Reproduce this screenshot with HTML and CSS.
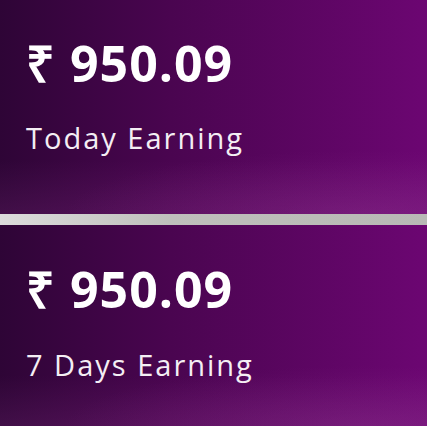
FILE: index.html
```html
<!DOCTYPE html>
<html>
<head>
<meta charset="utf-8">
<link rel="stylesheet" href="styles.css">
</head>
<body>
<div class="page">
  <div class="card">
    <div class="amount">₹ 950.09</div>
    <div class="label">Today Earning</div>
  </div>
  <div class="divider"></div>
  <div class="card card-second">
    <div class="amount">₹ 950.09</div>
    <div class="label">7 Days Earning</div>
  </div>
</div>
</body>
</html>
```
FILE: styles.css
```css
html, body {
  margin: 0;
  padding: 0;
  background: #b9bab6;
}
.page {
  display: flex;
  flex-direction: column;
  width: 427px;
  height: 426px;
  overflow: hidden;
}
.card {
  height: 214px;
  flex: none;
  box-sizing: border-box;
  padding: 31px 0 0 26px;
  background:
    radial-gradient(ellipse 70% 30% at 85% 100%, rgba(150, 60, 150, 0.25), rgba(150, 60, 150, 0) 100%),
    linear-gradient(to top, rgba(150, 60, 150, 0.18), rgba(150, 60, 150, 0) 25%),
    linear-gradient(to right, #2e0536 0%, #4a0550 40%, #6c0672 100%);
  color: #fff;
  font-family: "Open Sans", sans-serif;
}
.card-second {
  height: 201px;
  padding-top: 32px;
}
.amount {
  font-weight: 700;
  font-size: 50px;
  line-height: 64px;
  letter-spacing: 1px;
}
.label {
  margin-top: 24px;
  font-size: 29px;
  line-height: 38px;
  letter-spacing: 2px;
  color: #f4eef4;
}
.card-second .label {
  margin-top: 25px;
}
.divider {
  height: 11px;
  flex: none;
  background: linear-gradient(to right, #dcdcdc, #bfc0bc 40%, #b8b9b5);
}
```
